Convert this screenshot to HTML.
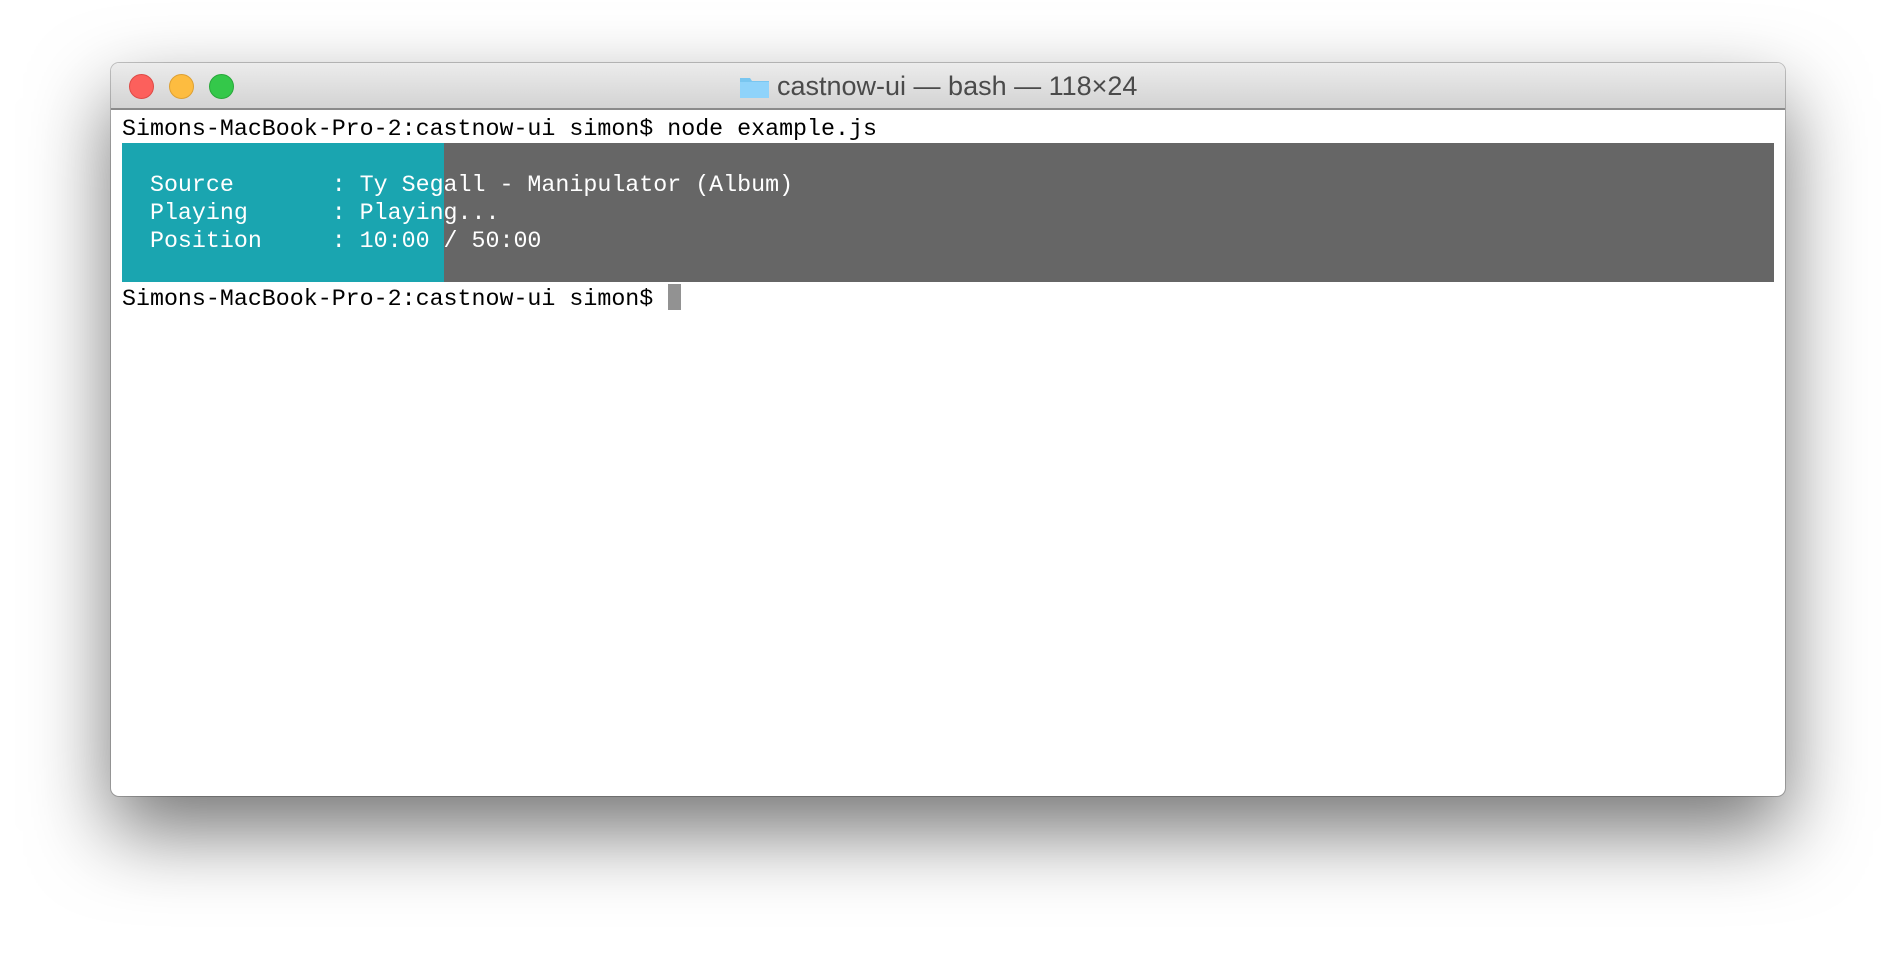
<!DOCTYPE html>
<html><head><style>
html,body{margin:0;padding:0;background:#fff;width:1896px;height:956px;overflow:hidden}
.win{position:absolute;left:111px;top:63px;width:1674px;height:733px;border-radius:8px;background:#fff;box-shadow:0 0 0 1px rgba(0,0,0,.22),0 35px 80px rgba(0,0,0,.55);overflow:hidden}
.tb{position:absolute;left:0;top:0;right:0;height:45px;background:linear-gradient(#ececec,#d3d3d3);border-bottom:2px solid #8a8a8a}
.dot{position:absolute;top:11px;width:23px;height:23px;border-radius:50%}
.title{position:absolute;left:666px;top:8px;font:27px "Liberation Sans",sans-serif;color:#4a4a4a}
.term{position:absolute;left:11px;top:52px;font:23.3px/28px "Liberation Mono",monospace;color:#000;white-space:pre}
.box{position:absolute;left:11px;top:80px;width:1652px;height:139px;background:#666}
.teal{position:absolute;left:0;top:0;width:322px;height:139px;background:#1aa5b0}
.info{position:absolute;left:11px;top:108px;font:23.3px/28px "Liberation Mono",monospace;color:#fff;white-space:pre}
.cur{position:absolute;left:557px;top:221px;width:13px;height:26px;background:#929292}
</style></head><body>
<div class="win">
<div class="tb">
<div class="dot" style="left:18px;background:#fc605c;border:0.5px solid #de4a46"></div>
<div class="dot" style="left:58px;background:#fdbc40;border:0.5px solid #dea032"></div>
<div class="dot" style="left:98px;background:#34c84a;border:0.5px solid #28a83a"></div>
<svg style="position:absolute;left:628px;top:12px" width="31" height="24" viewBox="0 0 31 24"><path d="M1 3h10l2 3h17v17H1z" fill="#79c6f0"/><rect x="1" y="7" width="29" height="16" fill="#8fd3fa"/></svg>
<div class="title">castnow-ui — bash — 118×24</div>
</div>
<div class="term">Simons-MacBook-Pro-2:castnow-ui simon$ node example.js</div>
<div class="box"><div class="teal"></div></div>
<div class="info">  Source       : Ty Segall - Manipulator (Album)
  Playing      : Playing...
  Position     : 10:00 / 50:00</div>
<div class="term" style="top:222px">Simons-MacBook-Pro-2:castnow-ui simon$ </div>
<div class="cur"></div>
</div>
</body></html>
